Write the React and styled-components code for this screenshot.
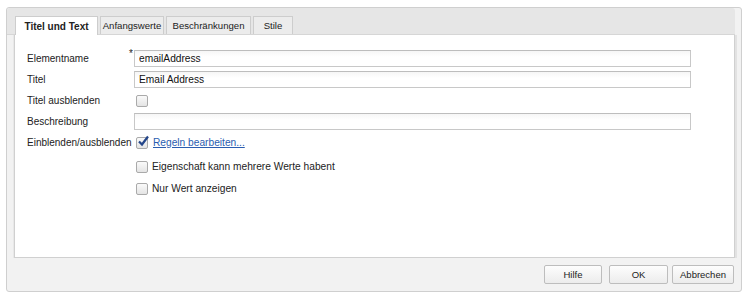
import styled, { createGlobalStyle } from "styled-components";

const GlobalStyle = createGlobalStyle`
  html, body {
    margin: 0;
    background: #fff;
    font-family: "Liberation Sans", Arial, sans-serif;
    font-size: 10.2px;
    color: #222;
  }
`;

const Page = styled.div`
  padding: 7px 8px 8px 6px;
  width: 750px;
  height: 299px;
  box-sizing: border-box;
`;

const Dialog = styled.div`
  border: 1px solid #cfcfcf;
  border-radius: 3px;
  background: #f2f2f2;
  display: flex;
  flex-direction: column;
  height: 285px;
  box-sizing: border-box;
`;

const TabStrip = styled.div`
  background: #e6e6e6;
  display: flex;
  gap: 2px;
  padding: 8px 0 0 8px;
  border-bottom: 1px solid #d6d6d6;
  margin: 0 6px 0 0;
  border-radius: 3px 3px 0 0;
`;

const Tab = styled.div`
  width: ${(p) => p.$w}px;
  box-sizing: border-box;
  display: flex;
  align-items: center;
  justify-content: center;
  border: 1px solid #cdcdcd;
  border-bottom: none;
  background: ${(p) => (p.$active ? "#fff" : "#ececec")};
  font-weight: ${(p) => (p.$active ? "bold" : "normal")};
  color: #222;
  font-size: ${(p) => (p.$active ? "10px" : "9.6px")};
  margin-bottom: ${(p) => (p.$active ? "-1px" : "0")};
  height: ${(p) => (p.$active ? "19px" : "18px")};
`;

const Body = styled.div`
  flex: 1;
  margin: 0 6px 0 7px;
  background: #fff;
  border: 1px solid #d0d0d0;
  border-top: none;
  box-shadow: 2px 0 0 #e2e2e2, -1px 0 0 #e8e8e8;
  padding: 15px 0 0 12px;
`;

const Grid = styled.div`
  display: grid;
  grid-template-columns: 107px 557px;
  row-gap: 4px;
`;

const Label = styled.div`
  height: 17px;
  display: flex;
  align-items: center;
  position: relative;
  font-size: 10px;
  color: #222;
  white-space: nowrap;
`;

const Star = styled.span`
  position: absolute;
  right: 1px;
  top: -2px;
  font-size: 10px;
`;

const Field = styled.div`
  height: 17px;
  display: flex;
  align-items: center;
`;

const Input = styled.input`
  width: 100%;
  height: 17px;
  box-sizing: border-box;
  border: 1px solid #c8c8c8;
  border-top-color: #bdbdbd;
  background: linear-gradient(#f6f6f6, #fff 40%);
  font-family: "Liberation Sans", Arial, sans-serif;
  font-size: 10.2px;
  padding: 0 4px;
  color: #111;
  outline: none;
`;

const Box = styled.span`
  width: 10px;
  height: 10px;
  border: 1px solid #aaa;
  border-radius: 2px;
  background: linear-gradient(#fafafa, #e4e4e4);
  display: inline-flex;
  flex-shrink: 0;
  margin-left: 2px;
  position: relative;
`;

const Check = styled.svg`
  position: absolute;
  left: 0;
  top: -3px;
  overflow: visible;
`;

const Link = styled.a`
  color: #2a5db0;
  text-decoration: underline;
  margin-left: 5px;
`;

const OptionRow = styled.div`
  grid-column: 2;
  display: flex;
  align-items: center;
  height: 17px;
  margin-top: ${(p) => p.$gap || 0}px;
  gap: 4px;
`;

const Footer = styled.div`
  height: 33px;
  display: flex;
  justify-content: flex-end;
  align-items: center;
  padding-right: 7px;
`;

const Button = styled.button`
  width: ${(p) => p.$w}px;
  height: 19px;
  margin-left: ${(p) => p.$ml || 0}px;
  border: 1px solid #bdbdbd;
  border-radius: 2px;
  background: linear-gradient(#fdfdfd, #ececec);
  font-family: "Liberation Sans", Arial, sans-serif;
  font-size: 9.5px;
  color: #222;
  padding: 0;
`;

const CheckBox = ({ checked }) => (
  <Box>
    {checked && (
      <Check width="12" height="12" viewBox="0 0 12 12">
        <path d="M2 6.5 L5 9.5 L11 1.5" fill="none" stroke="#24468a" strokeWidth="2.2" />
      </Check>
    )}
  </Box>
);

export default function App() {
  return (
    <Page>
      <GlobalStyle />
      <Dialog>
        <TabStrip>
          <Tab $active $w={83}>Titel und Text</Tab>
          <Tab $w={64}>Anfangswerte</Tab>
          <Tab $w={85}>Beschränkungen</Tab>
          <Tab $w={40}>Stile</Tab>
        </TabStrip>
        <Body>
          <Grid>
            <Label>
              Elementname<Star>*</Star>
            </Label>
            <Field>
              <Input defaultValue="emailAddress" />
            </Field>
            <Label>Titel</Label>
            <Field>
              <Input defaultValue="Email Address" />
            </Field>
            <Label>Titel ausblenden</Label>
            <Field>
              <CheckBox />
            </Field>
            <Label>Beschreibung</Label>
            <Field>
              <Input />
            </Field>
            <Label>Einblenden/ausblenden</Label>
            <Field>
              <CheckBox checked />
              <Link>Regeln bearbeiten...</Link>
            </Field>
            <OptionRow $gap={3}>
              <CheckBox />
              Eigenschaft kann mehrere Werte habent
            </OptionRow>
            <OptionRow $gap={1}>
              <CheckBox />
              Nur Wert anzeigen
            </OptionRow>
          </Grid>
        </Body>
        <Footer>
          <Button $w={58}>Hilfe</Button>
          <Button $w={59} $ml={7}>OK</Button>
          <Button $w={62} $ml={4}>Abbrechen</Button>
        </Footer>
      </Dialog>
    </Page>
  );
}
